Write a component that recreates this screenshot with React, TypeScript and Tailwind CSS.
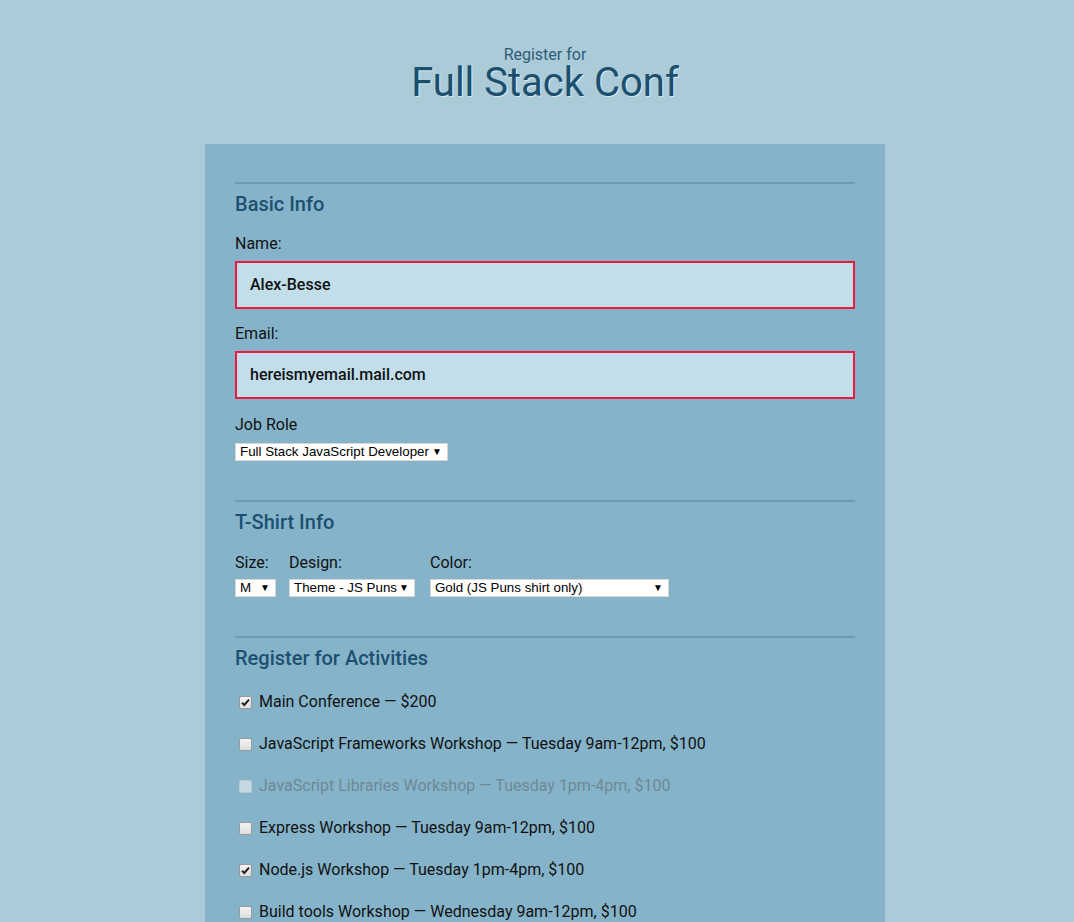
import type { ReactNode } from 'react';

const activities = [
  { label: 'Main Conference — $200', checked: true },
  { label: 'JavaScript Frameworks Workshop — Tuesday 9am-12pm, $100', checked: false },
  { label: 'JavaScript Libraries Workshop — Tuesday 1pm-4pm, $100', checked: false, disabled: true },
  { label: 'Express Workshop — Tuesday 9am-12pm, $100', checked: false },
  { label: 'Node.js Workshop — Tuesday 1pm-4pm, $100', checked: true },
  { label: 'Build tools Workshop — Wednesday 9am-12pm, $100', checked: false },
  { label: 'npm Workshop — Wednesday 1pm-4pm, $100', checked: false },
];

function Section({ title, children }: { title: string; children: ReactNode }) {
  return (
    <fieldset>
      <div className="border-t-2 border-[#6a9db5]" />
      <h2 className="mt-[8px] text-[20px] leading-[24px] font-medium text-[#1d5070]">{title}</h2>
      {children}
    </fieldset>
  );
}

function FakeSelect({ value, width }: { value: string; width: string }) {
  return (
    <div
      className={`${width} h-[18px] flex items-center justify-between bg-white border border-[#d6d6d6] pl-[4px] pr-[5px] font-['Liberation_Sans',Arial,sans-serif] text-[13.33px] leading-[16px] text-black`}
    >
      <span className="whitespace-nowrap">{value}</span>
      <span className="text-[10px] leading-none">▼</span>
    </div>
  );
}

function Checkbox({ checked, disabled }: { checked: boolean; disabled?: boolean }) {
  return (
    <span
      className={`w-[13px] h-[13px] rounded-[2px] border flex items-center justify-center ${
        disabled
          ? 'border-[#b7cbd5] bg-[#c5d9e2]'
          : 'border-[#9a9a9a] bg-gradient-to-b from-[#f4f4f4] to-[#dedede]'
      }`}
    >
      {checked && (
        <svg width="9" height="9" viewBox="0 0 9 9">
          <path d="M1 4.8 L3.3 7 L8 1.6" fill="none" stroke="#222" strokeWidth="2" />
        </svg>
      )}
    </span>
  );
}

export default function App() {
  return (
    <div className="min-h-screen bg-[#abcbd9] pl-[16px] font-['Roboto',sans-serif] text-[16px] text-[#111]">
      <header className="pt-[47px] text-center">
        <p className="text-[16px] leading-[16px] text-[#2e5c77]">Register for</p>
        <h1 className="text-[40px] leading-[40px] text-[#1b4f6e] [text-shadow:1px_1px_0_rgba(255,255,255,0.55)]">
          Full Stack Conf
        </h1>
      </header>

      <form className="mt-[41px] w-[680px] mx-auto bg-[#85b4ca] px-[30px] pt-[38px] pb-[40px]">
        <Section title="Basic Info">
          <label className="block mt-[18px] leading-[20px]">Name:</label>
          <div className="mt-[7px] h-[48px] border-2 border-[#ef1940] bg-[#c1deea] pl-[13px] flex items-center font-medium">
            Alex-Besse
          </div>
          <label className="block mt-[15px] leading-[20px]">Email:</label>
          <div className="mt-[7px] h-[48px] border-2 border-[#ef1940] bg-[#c1deea] pl-[13px] flex items-center font-medium">
            hereismyemail.mail.com
          </div>
          <label className="block mt-[16px] leading-[20px]">Job Role</label>
          <div className="mt-[8px]">
            <FakeSelect value="Full Stack JavaScript Developer" width="w-[213px]" />
          </div>
          <div className="h-[39px]" />
        </Section>

        <Section title="T-Shirt Info">
          <div className="mt-[19px] flex">
            <div className="mr-[13px]">
              <label className="block leading-[20px]">Size:</label>
              <div className="mt-[6px]">
                <FakeSelect value="M" width="w-[41px]" />
              </div>
            </div>
            <div className="mr-[15px]">
              <label className="block leading-[20px]">Design:</label>
              <div className="mt-[6px]">
                <FakeSelect value="Theme - JS Puns" width="w-[126px]" />
              </div>
            </div>
            <div>
              <label className="block leading-[20px]">Color:</label>
              <div className="mt-[6px]">
                <FakeSelect value="Gold (JS Puns shirt only)" width="w-[239px]" />
              </div>
            </div>
          </div>
          <div className="h-[39px]" />
        </Section>

        <Section title="Register for Activities">
          <div className="mt-[22px] flex flex-col gap-[22px]">
            {activities.map((a) => (
              <label
                key={a.label}
                className={`flex items-center h-[20px] leading-[20px] ${a.disabled ? 'text-[#6f8894]' : ''}`}
              >
                <span className="ml-[4px] mr-[7px]">
                  <Checkbox checked={a.checked} disabled={a.disabled} />
                </span>
                {a.label}
              </label>
            ))}
          </div>
        </Section>
      </form>
    </div>
  );
}
